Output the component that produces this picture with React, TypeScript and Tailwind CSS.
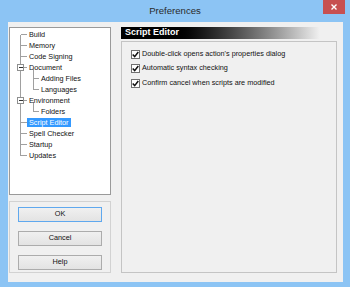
import React from 'react'

const TREE = [
  { label: 'Build', level: 0 },
  { label: 'Memory', level: 0 },
  { label: 'Code Signing', level: 0 },
  { label: 'Document', level: 0, open: true },
  { label: 'Adding Files', level: 1 },
  { label: 'Languages', level: 1 },
  { label: 'Environment', level: 0, open: true },
  { label: 'Folders', level: 1 },
  { label: 'Script Editor', level: 0, selected: true },
  { label: 'Spell Checker', level: 0 },
  { label: 'Startup', level: 0 },
  { label: 'Updates', level: 0 },
]

const OPTIONS = [
  "Double-click opens action's properties dialog",
  'Automatic syntax checking',
  'Confirm cancel when scripts are modified',
]

const ROW = 11
const cy = (i: number) => 1 + i * ROW + 5.5

function TreeLines() {
  const line = '#a0a0a0'
  return (
    <svg className="absolute left-0 top-0" width="100" height="166" shapeRendering="crispEdges">
      {/* root vertical */}
      <line x1="10.5" y1={cy(0)} x2="10.5" y2={cy(11)} stroke={line} />
      {TREE.map((t, i) =>
        t.level === 0 ? (
          <line key={i} x1={t.open ? 14 : 11} y1={cy(i)} x2="17" y2={cy(i)} stroke={line} />
        ) : (
          <line key={i} x1="23.5" y1={cy(i)} x2="29" y2={cy(i)} stroke={line} />
        )
      )}
      {/* children */}
      <line x1="23.5" y1={cy(3) + 1} x2="23.5" y2={cy(5)} stroke={line} />
      <line x1="23.5" y1={cy(6) + 1} x2="23.5" y2={cy(7)} stroke={line} />
      {[3, 6].map(i => (
        <g key={i}>
          <rect x="7.5" y={cy(i) - 3.5} width="6" height="6" fill="#fff" stroke="#8e8f8f" />
          <line x1="9" y1={cy(i) - 0.5} x2="12.5" y2={cy(i) - 0.5} stroke="#333" />
        </g>
      ))}
    </svg>
  )
}

function Check() {
  return (
    <span className="w-[9px] h-[9px] bg-white border border-[#707070] flex items-center justify-center shrink-0">
      <svg width="7" height="7" viewBox="0 0 6 6">
        <path d="M0.6 3 L2.3 4.8 L5.4 0.9" fill="none" stroke="#111" strokeWidth="1.3" />
      </svg>
    </span>
  )
}

function Btn({ label, primary }: { label: string; primary?: boolean }) {
  return (
    <div
      className={`h-[15px] flex items-center justify-center bg-gradient-to-b from-[#f0f0f0] to-[#e3e3e3] border ${
        primary ? 'border-[#5fa8ee]' : 'border-[#acacac]'
      } text-[7.3px] text-[#111]`}
    >
      {label}
    </div>
  )
}

export default function App() {
  return (
    <div
      className="w-[350px] h-[287px] bg-[#8cc4f4] flex flex-col overflow-hidden"
      style={{ fontFamily: '"Liberation Sans", Arial, sans-serif' }}
    >
      {/* Title bar */}
      <div className="h-[22px] relative flex items-center justify-center shrink-0">
        <span className="text-[9.6px] text-[#2b2b2b]">Preferences</span>
        <div className="absolute right-[5px] top-0 w-[22px] h-[14px] bg-[#c75050] flex items-center justify-center">
          <svg width="6" height="6" viewBox="0 0 6 6">
            <path d="M0.5 0.5 L5.5 5.5 M5.5 0.5 L0.5 5.5" stroke="#fff" strokeWidth="1.4" />
          </svg>
        </div>
      </div>

      {/* Client area */}
      <div className="ml-[8px] mr-[7px] mb-[5px] flex-1 bg-[#f0f0f0] flex pl-[1px] pt-[5px] pb-[9px] gap-[10px]">
        {/* Left column */}
        <div className="w-[102px] flex flex-col gap-[6px]">
          <div className="h-[168px] bg-white border border-[#9a9a9a] relative pt-[1px]">
            <TreeLines />
            {TREE.map(t => (
              <div
                key={t.label}
                className={`h-[11px] flex items-center ${t.level === 0 ? 'pl-[17px]' : 'pl-[29px]'}`}
              >
                <span
                  className={`px-[2px] h-[9px] leading-[9px] text-[7.25px] relative ${
                    t.selected ? 'bg-[#3399ff] text-white' : 'text-[#111]'
                  }`}
                >
                  {t.label}
                </span>
              </div>
            ))}
          </div>
          <div className="flex-1 border border-[#d2d2d2] px-[8px] pt-[5px] flex flex-col gap-[9px]">
            <Btn label="OK" primary />
            <Btn label="Cancel" />
            <Btn label="Help" />
          </div>
        </div>

        {/* Right column */}
        <div className="w-[216px] flex flex-col gap-[2px]">
          <div className="h-[12px] bg-gradient-to-r from-black from-[22%] to-[#f0f0f0] to-[92%] flex items-center pl-[4px]">
            <span className="text-[9px] font-bold text-white">Script Editor</span>
          </div>
          <div className="flex-1 border border-[#c4c4c4] pl-[9px] pt-[7px] flex flex-col gap-[4px]">
            {OPTIONS.map(o => (
              <div key={o} className="h-[10.5px] flex items-center gap-[2px]">
                <Check />
                <span className="text-[7.25px] text-[#111]">{o}</span>
              </div>
            ))}
          </div>
        </div>
      </div>
    </div>
  )
}
